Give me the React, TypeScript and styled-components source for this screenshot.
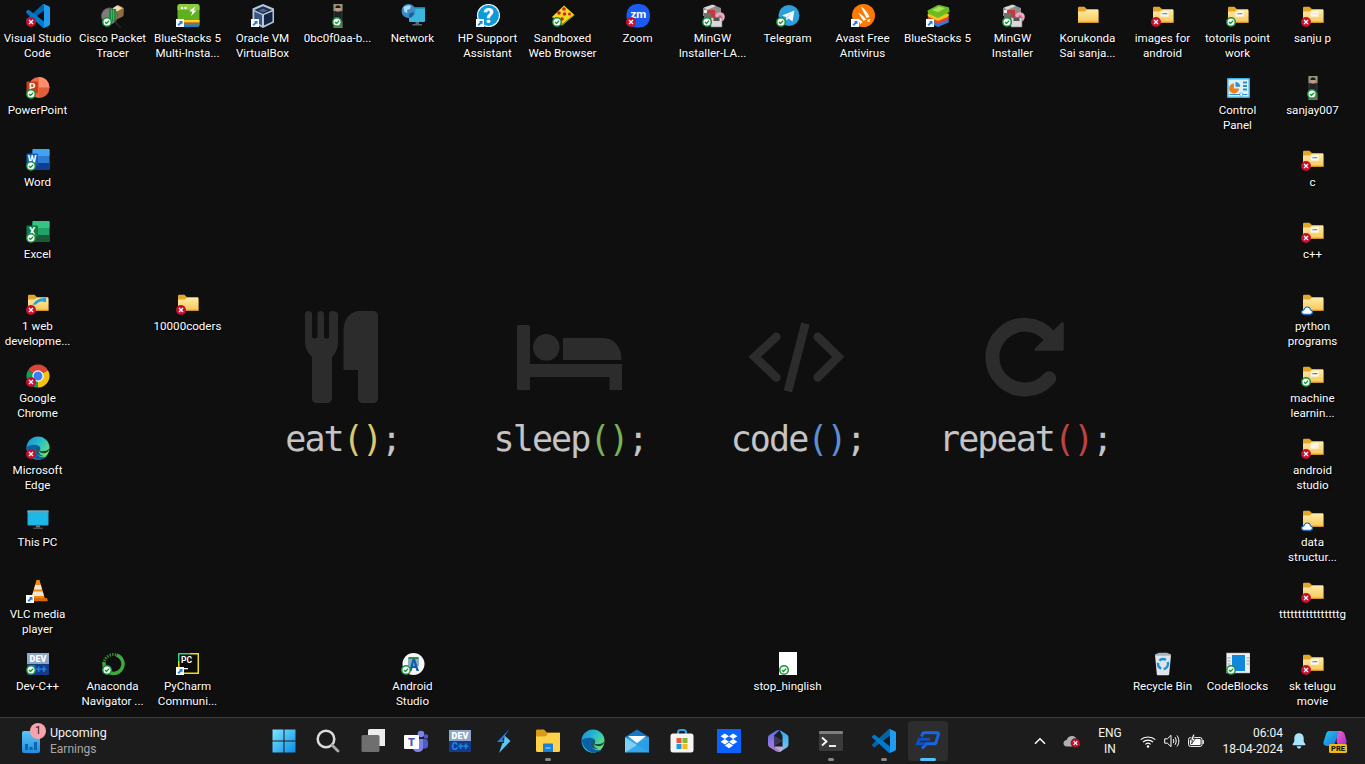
import React, { ReactNode } from "react";
import styled, { createGlobalStyle } from "styled-components";

const Global = createGlobalStyle`
  html, body { margin: 0; padding: 0; background: #0f0f10; overflow: hidden; }
  * { box-sizing: border-box; }
  #root { width: 1365px; height: 764px; }
`;

const Screen = styled.div`
  width: 1365px;
  height: 764px;
  display: flex;
  flex-direction: column;
  overflow: hidden;
  background: #0f0f10;
  font-family: Roboto, "Liberation Sans", sans-serif;
`;

const Desktop = styled.main`
  height: 717px;
  flex: none;
  display: grid;
  grid-template-columns: repeat(18, 75px);
  grid-template-rows: repeat(10, 72px);
  overflow: hidden;
`;

const Tile = styled.div<{ $col: number; $row: number }>`
  grid-column: ${(p) => p.$col};
  grid-row: ${(p) => p.$row};
  display: flex;
  flex-direction: column;
  align-items: center;
  padding-top: 4px;
  z-index: 1;
`;

const IconBox = styled.div`
  position: relative;
  width: 24px;
  height: 24px;
  flex: none;
  svg { display: block; }
`;

const Badge = styled.svg<{ $left?: number }>`
  position: absolute;
  left: ${(p) => p.$left ?? 0}px;
  bottom: 1px;
`;

const Label = styled.div`
  margin-top: 3px;
  font-size: 11.6px;
  line-height: 15px;
  color: #fff;
  text-align: center;
  white-space: pre;
  text-shadow: 1px 1px 2px #000, 0 0 1px #000;
`;

const Wallpaper = styled.section`
  grid-column: 1 / -1;
  grid-row: 1 / -1;
  justify-self: start;
  align-self: start;
  margin: 311px 0 0 229px;
  display: grid;
  grid-template-columns: repeat(4, 227.5px);
`;

const Motif = styled.div`
  display: flex;
  flex-direction: column;
  align-items: center;
`;

const MotifArt = styled.div`
  height: 92px;
  margin-right: 2px;
  display: flex;
  align-items: center;
  justify-content: center;
`;

const Code = styled.div`
  margin-top: 14px;
  font-family: "DejaVu Sans Mono", "Liberation Mono", monospace;
  font-size: 35px;
  line-height: 44px;
  letter-spacing: -1.9px;
  color: #c4c4c4;
  white-space: pre;
`;

const Paren = styled.span<{ $c: string }>`
  color: ${(p) => p.$c};
`;

const Bar = styled.footer`
  height: 47px;
  flex: none;
  display: flex;
  align-items: center;
  background: #1c1c1c;
  border-top: 1px solid #3d3d3d;
  color: #fff;
  font-size: 12px;
`;

const Widget = styled.div`
  width: 264px;
  flex: none;
  display: flex;
  align-items: center;
  padding-left: 22px;
  gap: 10px;
`;

const WidgetIcon = styled.div`
  position: relative;
  width: 18px;
  height: 22px;
  margin-top: 2px;
`;

const Count = styled.span`
  position: absolute;
  left: 8px;
  top: -8px;
  width: 16px;
  height: 16px;
  border-radius: 50%;
  background: #f7a3ab;
  color: #1c1c1c;
  font-size: 11px;
  line-height: 16px;
  text-align: center;
`;

const WidgetText = styled.div`
  display: flex;
  flex-direction: column;
  font-size: 12.5px;
  line-height: 16px;
  color: #f2f2f2;
`;

const WidgetSub = styled.span`
  font-size: 12px;
  color: #a8a8a8;
`;

const Apps = styled.nav`
  display: flex;
  align-items: center;
`;

const AppButton = styled.div<{ $gap?: number; $active?: boolean }>`
  position: relative;
  width: 40px;
  height: 40px;
  margin-left: ${(p) => p.$gap ?? 0}px;
  display: flex;
  align-items: center;
  justify-content: center;
  border-radius: 4px;
  background: ${(p) => (p.$active ? "#2d2d2d" : "transparent")};
  svg { display: block; }
`;

const RunDot = styled.span<{ $active?: boolean }>`
  position: absolute;
  left: 50%;
  bottom: 0;
  width: ${(p) => (p.$active ? 16 : 6)}px;
  height: 3px;
  margin-left: ${(p) => (p.$active ? -8 : -3)}px;
  border-radius: 2px;
  background: ${(p) => (p.$active ? "#4cc2ff" : "#8a8a8a")};
`;

const Tray = styled.aside`
  margin-left: auto;
  display: flex;
  align-items: center;
  padding-right: 10px;
`;

const TrayCell = styled.div<{ $w: number }>`
  position: relative;
  width: ${(p) => p.$w}px;
  height: 44px;
  display: flex;
  align-items: center;
  justify-content: center;
  svg { display: block; }
`;

const TextStack = styled.div<{ $align: string }>`
  display: flex;
  flex-direction: column;
  width: 100%;
  font-size: 12px;
  line-height: 16px;
  text-align: ${(p) => p.$align};
  color: #f4f4f4;
`;

const S = ({ children, vb = "0 0 24 24", w = 24, h = 24 }: { children: ReactNode; vb?: string; w?: number; h?: number }) => (
  <svg viewBox={vb} width={w} height={h} xmlns="http://www.w3.org/2000/svg" fontFamily="Roboto, sans-serif">
    {children}
  </svg>
);

const vsPaths = (a: string, b: string, c: string) => (
  <>
    <path fill={a} d="M96.46 10.8 75.86.9C73.47-.25 70.62.24 68.75 2.11L1.3 63.6c-1.81 1.65-1.81 4.51 0 6.16l5.51 5.01c1.49 1.35 3.72 1.45 5.32.24L93.36 13.37c2.73-2.07 6.64-.12 6.64 3.3v-.24c0-2.4-1.37-4.58-3.54-5.63Z" />
    <path fill={b} d="M96.46 89.2 75.86 99.1c-2.39 1.15-5.24.66-7.11-1.21L1.3 36.4c-1.81-1.65-1.81-4.51 0-6.16l5.51-5.01c1.49-1.35 3.72-1.45 5.32-.24L93.36 86.63c2.73 2.07 6.64.12 6.64-3.3v.24c0 2.4-1.37 4.58-3.54 5.63Z" />
    <path fill={c} d="M75.86 99.13c-2.39 1.15-5.24.66-7.11-1.21 2.31 2.31 6.25.67 6.25-2.59V4.67c0-3.26-3.94-4.9-6.25-2.59 1.87-1.87 4.72-2.36 7.11-1.21L96.46 10.78C98.62 11.82 100 14 100 16.4v67.2c0 2.4-1.38 4.58-3.54 5.62Z" />
  </>
);

const VsCode = () => <S vb="0 0 100 100">{vsPaths("#0065a9", "#007acc", "#1f9cf0")}</S>;

const Folder = ({ paper, swoosh }: { paper?: string; swoosh?: boolean }) => (
  <S>
    <defs>
      <linearGradient id="folderG" x1="0" y1="0" x2="0" y2="1">
        <stop offset="0" stopColor="#ffeaa6" />
        <stop offset="1" stopColor="#f7c653" />
      </linearGradient>
    </defs>
    <path fill="#e6a62c" d="M2 4.200C2 3.200 2.600 2.800 3.400 2.800h5l2.400 2.200H21.400c.6 0 1 .4 1 1v12.200c0 .5-.3.800-.8.800H2.800c-.5 0-.8-.3-.8-.8Z" />
    <path fill="url(#folderG)" d="M2 8.200c0-.4.3-.7.7-.7h6l2-1.400h11c.4 0 .7.300.7.700v11.400c0 .5-.3.800-.7.800H2.700c-.4 0-.7-.3-.7-.8Z" />
    {paper && (
      <>
        <path fill="#fbfaf6" d="M9.500 8.200 16 6.900l1.600.4v5.400H9.500Z" opacity=".92" />
        <path fill={paper} d="M10.500 9.800c1.800-.9 3.700-1 5.800-.6v1h-5.200Z" />
      </>
    )}
    {swoosh && <path fill="#25a5d4" d="M7 13c1.500-4.500 6-7.500 13-7 .5 1.800.3 3.500-.5 4.500-3-1.800-7-1-9 1.800Z" />}
    <path fill="#cf932a" d="M2 17.700h20.400v.5c0 .5-.3.800-.7.800H2.700c-.4 0-.7-.3-.7-.8Z" />
  </S>
);

const Cisco = () => (
  <S>
    <path fill="#c9a766" d="M9 6 17 1l5.500 3-.3 8-7 3.500L9 12Z" />
    <path fill="#8c6f3a" d="m15.200 8 7.300-4-.3 8-7 3.500Z" />
    <path fill="#eeddb0" d="m11 4.800 5-3.200 5 2.600-5 3Z" />
    <circle cx="8.500" cy="12" r="8" fill="#7d7d7d" stroke="#5b5b5b" />
    <path fill="#0d6f2a" d="M8.500 5h6.400v12H8.500Z" />
    <path stroke="#37d060" strokeWidth=".7" d="M9 7h6M9 9h6M9 11h6M9 13h6M9 15h6M10.500 5v12M12.500 5v12" />
    <path stroke="#222" strokeWidth="2" d="m14 18 6 6" />
  </S>
);

const BlueStacksMulti = () => (
  <S>
    <rect x="1.500" y="0" width="22" height="23" rx="2.500" fill="#5eb11d" />
    <path fill="#8ecb3f" d="M1.500 2.500C1.500 1 2.500 0 4 0h17c1.400 0 2.500 1 2.500 2.500V6H1.500Z" />
    <path fill="#ffd21f" d="M1.500 16h22v2.500h-22Z" />
    <path fill="#e6443a" d="M1.500 18.500h22V20.500h-22Z" />
    <path fill="#1c7fd6" d="M1.500 20.500h22c0 1.500-1 2.500-2.500 2.500H4c-1.500 0-2.500-1-2.500-2.500Z" />
    <path fill="#fff" d="m14.500 6 5-3.500-2 4h3l-5.500 5.500 1.500-4.500h-3ZM5 3h2v2H5Zm3.500 0h2v2h-2Z" />
  </S>
);

const VirtualBox = () => (
  <S>
    <path fill="#b9c6d9" d="M12 0 23 4.500v14L12 24 1.500 18.500v-14Z" />
    <path fill="#1c2f55" d="M12 2.200 21 6l-9 4-8.700-4Z" />
    <path fill="#3b5688" d="M3.300 7.500 11 11v10.500l-7.700-4Z" />
    <path fill="#142544" d="M13 11l8.500-3.500v10L13 21.500Z" />
    <path fill="#fff" d="M12 4.500 16.500 6.500 12 8.500 7.500 6.500Z" opacity=".25" />
  </S>
);

const Portrait = () => (
  <S>
    <rect x="7.500" y="0" width="9" height="24" fill="#3a3a38" />
    <rect x="7.500" y="0" width="9" height="7" fill="#9a927e" />
    <circle cx="12" cy="5" r="2.600" fill="#c29a7c" />
    <path fill="#1a1a1a" d="M9.400 4c0-2 1.300-2.800 2.600-2.800S14.600 2 14.600 4Z" />
    <rect x="8.500" y="8" width="7" height="9" fill="#20242a" />
    <rect x="7.500" y="17" width="9" height="7" fill="#6d7564" />
  </S>
);

const Network = () => (
  <S>
    <rect x="8" y="3" width="16" height="15" rx="1" fill="#3bb6de" />
    <rect x="8" y="3" width="16" height="1.500" fill="#1d7fa6" />
    <path fill="#5a6a72" d="M14.500 18h3.500v2h3v1.400h-9.500V20h3Z" />
    <circle cx="7.500" cy="7" r="7" fill="#3d8cc8" />
    <path fill="#a8ddf6" d="M2.500 3.500c2-2 6-2.500 7.500-1.500l-1 3-3 1 .5 3-3-1Z" />
    <path fill="#1a5f96" d="M8 10l4-2 1 2-2.500 3.300L8 14Z" />
  </S>
);

const HpSupport = () => (
  <S>
    <circle cx="12.500" cy="11.500" r="11" fill="#0a9bd8" stroke="#e8f4fa" strokeWidth="1.200" />
    <text x="12.500" y="18.500" textAnchor="middle" fontSize="20" fontWeight="900" fill="#fff">?</text>
  </S>
);

const Sandbox = () => (
  <S>
    <path fill="#f3dc1c" d="M1 13 13 1.500l10.500 9.500L11 21.500Z" />
    <path fill="#8c8a16" d="m1 13 10 8.500L23.500 11l-.5-.6L11 19.800 1.500 12.500Z" />
    <g fill="#d81e1e">
      <circle cx="13" cy="5" r="1.800" />
      <circle cx="8" cy="9" r="1.800" />
      <circle cx="13.500" cy="10" r="1.800" />
      <circle cx="18.500" cy="10" r="1.500" />
      <circle cx="11" cy="15" r="1.800" />
    </g>
  </S>
);

const Zoom = () => (
  <S>
    <rect x="0.500" y="0" width="23.500" height="23.500" rx="10.500" fill="#1a5cf2" />
    <text x="12.300" y="13.500" textAnchor="middle" fontSize="11.500" fontWeight="700" fill="#fff">zm</text>
  </S>
);

const MinGW = () => (
  <S>
    <path fill="#8d8d8d" d="M2 4 11 .5l9 3.500v8H2Z" />
    <path fill="#d9d9d9" d="M3 3.500 12 .8 15 2 6 6Z" />
    <path fill="#c23b3b" d="M5 6h9v7H5Z" />
    <path fill="#ededed" d="M3 6h3v12H3Z" />
    <circle cx="19" cy="13" r="4.800" fill="#f0a8c0" />
    <circle cx="19" cy="13" r="1.800" fill="#b76a8a" />
    <rect x="10" y="13.500" width="11" height="9.500" fill="#d9d9d9" stroke="#777" strokeWidth=".6" />
    <rect x="12.500" y="13.500" width="6" height="3.500" fill="#555" />
    <rect x="3" y="9" width="7" height="13" fill="#6f6f6f" />
  </S>
);

const Telegram = () => (
  <S>
    <circle cx="13" cy="11.500" r="10.500" fill="#2d9fd9" />
    <path fill="#f3fafd" d="M6 11.500 18.500 6.500l-2 11-4-3-2 2-.5-3.500Z" />
    <path fill="#c8e0ee" d="m10 13 6-4.500-4.500 5.800-1.500 2Z" />
  </S>
);

const Avast = () => (
  <S>
    <circle cx="12.500" cy="11.500" r="11.500" fill="#ff7800" />
    <path fill="#fff" d="M10 2.500c2 1 6 5 8.500 10l-3 1.500C13.500 9.500 11 5.500 10 2.500Zm-3 6c3 1.500 6 4 8 7L12.500 17C10.500 13.500 8.500 11 7 8.500Zm-1.500 6c2 .3 4 1.200 6 3.500l-2 2c-1.500-2.400-3-4-4-5.500ZM19.500 15c-1 0-2.500.5-3.500 1.500.5 1 1.500 1.500 2.500 1.500Z" />
  </S>
);

const BlueStacks = () => (
  <S>
    <path fill="#2f7bd9" d="M1.500 16 12 12l11 4-.5 2.500L12 23l-10-4.500Z" />
    <path fill="#e64535" d="M1.500 13 12 9l11 4-.5 2.500-10.500 4.500-10-4.500Z" />
    <path fill="#f7c51d" d="M1.500 10 12 6l11 4-.5 2.500L12 17 2 12.500Z" />
    <path fill="#6bbb21" d="M1.500 6.500 12 1c3 0 8 1.500 11 2.500l.5 4.500L12 14 2 9.500Z" />
    <path fill="#a9e05a" d="M6 6 13 2.500l6 1.800-7 4Z" />
  </S>
);

const ControlPanel = () => (
  <S>
    <rect x="1" y="2" width="23" height="20" rx="1" fill="#36b2e6" />
    <rect x="2.500" y="3.500" width="20" height="17" fill="#dbf1fb" />
    <path fill="#e9821d" d="M8 7.500a5 5 0 1 0 5 5H8Z" />
    <path fill="#2f8ed0" d="M9.500 6a4.800 4.800 0 0 1 4.800 4.800H9.500Z" />
    <path fill="#2f8ed0" d="M17 5.500h4v2h-4Zm0 3.500h4v2h-4Zm0 3.500h4v2h-4Z" />
    <path stroke="#2f8ed0" strokeWidth="1" d="M3.500 18.500h18" />
    <rect x="14" y="17" width="2.500" height="3" fill="#fff" stroke="#2f8ed0" strokeWidth=".5" />
  </S>
);

const Office = ({ dark, mid, light, letter, pale }: { dark: string; mid: string; light: string; letter: string; pale: string }) => (
  <S>
    <rect x="6.500" y="1" width="17" height="21" rx="1" fill={mid} />
    <rect x="6.500" y="1" width="17" height="7" rx="1" fill={light} />
    <rect x="6.500" y="15" width="17" height="7" rx="1" fill={dark} />
    <rect x="0.500" y="5.500" width="11.500" height="12" rx="1" fill={pale} />
    <text x="6.200" y="15" textAnchor="middle" fontSize="10" fontWeight="700" fill="#fff">{letter}</text>
  </S>
);

const PowerPoint = () => (
  <S>
    <circle cx="13" cy="11.500" r="10.500" fill="#ed6c47" />
    <path fill="#ff8f6b" d="M13 1a10.500 10.500 0 0 1 10.500 10.500H13Z" />
    <path fill="#d35230" d="M13 11.500h10.500A10.500 10.500 0 0 1 13 22Z" opacity=".5" />
    <rect x="0.500" y="5.500" width="11.500" height="12" rx="1" fill="#c43e1c" />
    <text x="6.200" y="15" textAnchor="middle" fontSize="10" fontWeight="700" fill="#fff">P</text>
  </S>
);

const Chrome = () => (
  <S>
    <path fill="#db4437" d="M12 12 2.040 6.250A11.500 11.500 0 0 1 21.960 6.250Z" />
    <path fill="#f4c20d" d="M12 12 21.960 6.250A11.500 11.500 0 0 1 12 23.500Z" />
    <path fill="#0f9d58" d="M12 12 12 23.500A11.500 11.500 0 0 1 2.040 6.250Z" />
    <circle cx="12" cy="12" r="5.700" fill="#fff" />
    <circle cx="12" cy="12" r="4.500" fill="#3a7ff0" />
  </S>
);

const Edge = () => (
  <S>
    <defs>
      <linearGradient id="edgeG" x1="0" y1="0" x2="1" y2=".7">
        <stop offset="0" stopColor="#1390d8" />
        <stop offset=".55" stopColor="#2bc0c8" />
        <stop offset="1" stopColor="#6ee56a" />
      </linearGradient>
    </defs>
    <circle cx="12" cy="12" r="11.500" fill="url(#edgeG)" />
    <path fill="#0a5fa8" d="M.6 11.500C2 17.500 7 23.500 13 23.500c3 0 6-1 8-3-4 1.500-9 .5-11-3.500-1.500-3 0-6 3-7-3-2-10-2-12.400 1.500Z" />
    <path fill="#0f2e4a" d="M13 10c-3 1-4.500 4-3 7 1.500 2.500 5 3.800 8 3.200-3-.5-5-2.500-5.200-5 2-1 1.800-3.800.2-5.200Z" opacity=".7" />
    <path fill="#0f0f10" d="M12.800 14.800c1.500 2.500 5.500 3 8.200 1.500 1.500-1 2.400-2.800 2.500-4.300-1.500 2.800-6.500 4-10.700 2.800Z" opacity=".75" />
  </S>
);

const Monitor = () => (
  <S>
    <rect x="1.500" y="2.500" width="21" height="15" rx=".8" fill="#29a8d9" />
    <rect x="1.500" y="2.500" width="21" height="2" fill="#8f9ca1" />
    <path fill="#1bb8e8" d="M2.500 4.500h19v12h-19Z" />
    <rect x="10" y="17.500" width="4" height="2" fill="#777" />
    <rect x="7" y="19.500" width="10" height="1.500" rx=".5" fill="#4b4b4b" />
  </S>
);

const Vlc = () => (
  <S>
    <path fill="#f28a0f" d="M10.500 0h3l6 20.500h-15Z" />
    <path fill="#efe6d8" d="M9.200 5h5.600l1.200 4.500H8Zm-1.800 6.500h9.200l1.400 4.500H6Z" />
    <path fill="#d96a00" d="M3 18h18l.7 2.500c.1.500-.2.800-.7.800H3c-.5 0-.8-.3-.7-.8Z" />
  </S>
);

const DevCpp = () => (
  <S>
    <rect x="1" y="1" width="22" height="22" fill="#163a88" />
    <rect x="1" y="1" width="22" height="11" fill="#8ea7c8" />
    <text x="12" y="10" textAnchor="middle" fontSize="9" fontWeight="900" fill="#fff">DEV</text>
    <text x="12" y="21" textAnchor="middle" fontSize="10" fontWeight="900" fill="#1b82e6">C++</text>
  </S>
);

const Anaconda = () => (
  <S>
    <g transform="rotate(-70 12.500 12)">
      <circle cx="12.500" cy="12" r="9.500" fill="none" stroke="#2f8d2e" strokeWidth="3" strokeDasharray="1.400 1.200" />
      <circle cx="12.500" cy="12" r="9.500" fill="none" stroke="#3fa83a" strokeWidth="3.400" strokeDasharray="43 17" />
    </g>
  </S>
);

const PyCharm = () => (
  <S>
    <rect x="2" y="1" width="21" height="21" fill="#e8e01d" />
    <path fill="#21d789" d="M2 1h12v2H4v6H2Z" />
    <rect x="3.500" y="2.500" width="18" height="18" fill="#0b0b0b" />
    <text x="10.500" y="11" textAnchor="middle" fontSize="8.500" fontWeight="700" fill="#fff">PC</text>
    <rect x="5" y="16" width="7" height="1.300" fill="#fff" />
  </S>
);

const AndroidStudio = () => (
  <S>
    <circle cx="12.500" cy="12" r="11" fill="#f6f7f8" />
    <path fill="#3e7d9c" d="M7 6h11v8H7Z" opacity=".6" />
    <path fill="#0f5fb0" d="M11.500 7h2.500l4 12h-2.500l-1-3h-3l-1 3H8Zm1.300 3-.9 4h1.800Z" />
    <path fill="#2e8b57" d="M7.500 5h10v2h-10Z" />
  </S>
);

const StopDoc = () => (
  <S>
    <rect x="3" y="0" width="18" height="23" fill="#fff" />
  </S>
);

const Recycle = () => (
  <S>
    <path fill="#dfe5ea" d="M4 3h16l-1.800 19c0 .8-.6 1.300-1.300 1.300H7.100c-.7 0-1.300-.5-1.300-1.300Z" />
    <path fill="#a9b4bc" d="M4 2.500 8 .8h8l4 1.700v1.300H4Z" />
    <circle cx="12" cy="12" r="5" fill="none" stroke="#1a8fdb" strokeWidth="2.400" strokeDasharray="7 2.500" />
  </S>
);

const CodeBlocks = () => (
  <S>
    <rect x="0.500" y="1" width="23.500" height="20" fill="#eef0f2" stroke="#9aa4ab" strokeWidth=".5" />
    <rect x="6" y="3" width="13" height="16" fill="#1088dc" />
    <path stroke="#93a1ab" strokeWidth="1" d="M1.500 6h3M1.500 9h3M1.500 12h3M20.500 6h3M20.500 9h3M20.500 12h3" />
  </S>
);

const Windows = () => (
  <S>
    <defs>
      <linearGradient id="winG" x1="0" y1="0" x2="1" y2="1">
        <stop offset="0" stopColor="#7ce6ff" />
        <stop offset="1" stopColor="#0a8ce8" />
      </linearGradient>
    </defs>
    <path fill="url(#winG)" d="M.5.500h11v11H.5Zm12 0h11v11h-11Zm-12 12h11v11H.5Zm12 0h11v11h-11Z" />
  </S>
);

const Search = () => (
  <S>
    <circle cx="10" cy="10" r="8.300" fill="none" stroke="#dcdcdc" strokeWidth="2.500" />
    <path stroke="#a9a9a9" strokeWidth="2.800" strokeLinecap="round" d="m16.200 16.200 5.800 5.800" />
  </S>
);

const TaskView = () => (
  <S>
    <rect x="7" y="0" width="18" height="17" rx="1.500" fill="#ededed" />
    <rect x="0.500" y="6" width="18" height="17" rx="1.500" fill="#6f6f6f" />
  </S>
);

const Teams = () => (
  <S>
    <circle cx="17" cy="5" r="3.300" fill="#7b83eb" />
    <circle cx="22" cy="7.500" r="2.200" fill="#5059c9" />
    <rect x="15" y="10" width="9" height="9.500" rx="3" fill="#5059c9" />
    <path fill="#7b83eb" d="M9 10h10v9c0 2.700-2.300 4-5 4s-5-1.500-5-4Z" />
    <rect x="0" y="6" width="15" height="14" rx="1" fill="#fff" />
    <text x="7.500" y="17" textAnchor="middle" fontSize="11" fontWeight="900" fill="#4b53bc">T</text>
  </S>
);

const Bolt = () => (
  <S>
    <path fill="#2a7fe6" d="M17.500 0 5 13h6l1-1.500L10 11Z" />
    <path fill="#58c9f6" d="M12.500 6.500 18.500 12 7 24l3.500-10H12Z" />
  </S>
);

const Explorer = () => (
  <S>
    <path fill="#d99a1a" d="M0 2c0-.8.6-1.400 1.400-1.400h6.600l3 3h12.600c.2 0 .4.2.4.4v4H0Z" />
    <path fill="#ffd24a" d="M0 7.500l10-.2 2-3.300h12v17.500c0 .8-.6 1.500-1.500 1.500h-21C.7 23 0 22.300 0 21.500Z" />
    <path fill="#1c7fd8" d="M7 15.500c0-.6.4-1 1-1h8c.6 0 1 .4 1 1V23H7Z" />
    <path fill="#58b8f0" d="M9.500 18h5v2h-5Z" />
  </S>
);

const Mail = () => (
  <S>
    <path fill="#1478c4" d="M0 8 12 .5 24 8v3H0Z" />
    <path fill="#35a8ea" d="M0 8.500h24V23.500H0Z" />
    <path fill="#fff" d="M3 7h18l-9 7Z" />
    <path fill="#1b92dc" d="M0 8.500 12 16l12-7.500-12 8Z" />
    <path fill="#7dd1f7" d="M0 8.500 12 16 0 23.500Z" />
    <path fill="#2b9fe6" d="M24 8.500 12 16l12 7.500Z" />
  </S>
);

const Store = () => (
  <S>
    <path fill="none" stroke="#2aa5e8" strokeWidth="2" d="M8 6V3.500C8 2 9 1 10.500 1h3C15 1 16 2 16 3.500V6" />
    <rect x="0.500" y="4.500" width="23" height="19" rx="2.500" fill="#f4f4f4" />
    <rect x="6.500" y="9" width="5" height="5" fill="#ea5a30" />
    <rect x="12.500" y="9" width="5" height="5" fill="#7fba2f" />
    <rect x="6.500" y="15" width="5" height="5" fill="#1b9ae6" />
    <rect x="12.500" y="15" width="5" height="5" fill="#fdb813" />
  </S>
);

const Dropbox = () => (
  <S>
    <rect x="0" y="0" width="24" height="24" fill="#0a62ff" />
    <path fill="#fff" d="M7.800 4.500 12 7.200 7.800 10 3.600 7.200Zm8.400 0L20.400 7.200 16.200 10 12 7.200ZM3.600 12.800 7.800 10 12 12.800 7.800 15.500Zm12.600-2.800 4.200 2.800-4.200 2.700L12 12.800ZM7.800 16.500 12 13.800l4.200 2.700L12 19.300Z" />
  </S>
);

const M365 = () => (
  <S vb="-1.500 0 24 24">
    <defs>
      <linearGradient id="mL" x1="0" y1="0" x2="0" y2="1">
        <stop offset="0" stopColor="#5a6fe0" />
        <stop offset="1" stopColor="#b47ae0" />
      </linearGradient>
      <linearGradient id="mR" x1="0" y1="0" x2="0" y2="1">
        <stop offset="0" stopColor="#2fa8ea" />
        <stop offset="1" stopColor="#7fc8f0" />
      </linearGradient>
    </defs>
    <path fill="url(#mL)" d="M2.500 5.500 9 1.500C9.800 1 11 .8 12 1.200L6.500 6.500V17.500L12 22.800c-1 .4-2.200.2-3-.3l-6.500-4C1 17.600.5 16.500.5 15V9c0-1.500.5-2.600 2-3.500Z" />
    <path fill="url(#mR)" d="M12 1.200c.5.100 1 .3 1.500.6l5.500 3.500c1.500 1 2 2 2 3.500v6.400c0 1.500-.5 2.500-2 3.500l-5.500 3.500c-.5.3-1 .5-1.500.6l3-5V6.500Z" />
    <path fill="#d2b2ea" d="M6.500 17.500 12 22.800c.5-.1 1-.3 1.500-.6l2-4.700Z" opacity=".9" />
    <path fill="#3f3a66" d="M6.500 6.500 15 11.700 6.500 17.500Z" opacity=".85" />
  </S>
);

const Terminal = () => (
  <S>
    <rect x="0" y="2" width="24" height="20" rx="1.500" fill="#3a3a3a" />
    <rect x="0" y="2" width="24" height="3" rx="1" fill="#7e7e7e" />
    <path fill="none" stroke="#fff" strokeWidth="1.800" d="m3 8.500 4.500 4L3 16.500" />
    <path stroke="#fff" strokeWidth="1.800" d="M10 17h7" />
  </S>
);

const ChatLogo = () => (
  <S vb="0 0 26 20" w={26} h={20}>
    <path fill="none" stroke="#1766e8" strokeWidth="3" d="M6.500 5.500 7.800 2.400c.2-.4.6-.7 1-.7h13.500c.9 0 1.400.7 1.200 1.500L21 11.500c-.2.7-.8 1.200-1.500 1.200H11.500L7 17.500" />
    <path fill="none" stroke="#0f4fc0" strokeWidth="3" d="M15 8.200H4.500L2.400 12.700h8" />
  </S>
);

const Chevron = () => (
  <S vb="0 0 12 8" w={12} h={8}>
    <path fill="none" stroke="#fff" strokeWidth="1.500" d="M1 6.800 6 1.800l5 5" />
  </S>
);

const TrayCloud = () => (
  <S vb="0 0 18 14" w={18} h={14}>
    <path fill="#b0b0b0" d="M4 12.500C1.800 12.500.5 11 .5 9.300.5 7.500 2 6 3.700 6 4.500 3.500 6.500 2 9 2c3 0 5 2.200 5.200 5 1.600.1 2.800 1.500 2.800 3 0 1.700-1.300 2.500-3 2.500Z" />
    <circle cx="12.500" cy="9" r="4.500" fill="#c8102e" stroke="#1c1c1c" strokeWidth=".6" />
    <path stroke="#fff" strokeWidth="1.200" d="m10.700 7.200 3.600 3.600m0-3.600-3.600 3.600" />
  </S>
);

const Wifi = () => (
  <S vb="0 0 16 13" w={16} h={13}>
    <g fill="none" stroke="#fff" strokeWidth="1.100">
      <path d="M.7 4.700C4.700 1 11.300 1 15.300 4.700" />
      <path d="M3 7c2.800-2.500 7.200-2.500 10 0" />
      <path d="M5.400 9.300c1.500-1.300 3.700-1.300 5.200 0" />
    </g>
    <circle cx="8" cy="11.500" r="1.200" fill="#fff" />
  </S>
);

const Volume = () => (
  <S vb="0 0 16 14" w={16} h={14}>
    <path fill="none" stroke="#fff" strokeWidth="1" d="M.7 4.800h2.700L7 1.300v11.400L3.400 9.200H.7Z" />
    <path fill="none" stroke="#fff" strokeWidth="1" d="M9.200 5c.8 1.200.8 2.800 0 4M11 3.200c1.600 2.300 1.600 5.300 0 7.600M13 1.500c2.400 3.300 2.400 7.700 0 11" />
  </S>
);

const Battery = () => (
  <S vb="0 0 16 14" w={16} h={14}>
    <rect x=".6" y="3.600" width="13.400" height="8.800" rx="1.800" fill="none" stroke="#fff" strokeWidth="1" />
    <rect x="2" y="5" width="10.600" height="6" rx=".8" fill="#fff" />
    <rect x="14.500" y="6" width="1.300" height="4" rx=".6" fill="#fff" />
    <path fill="#fff" stroke="#1c1c1c" strokeWidth=".8" d="M5 .2 2.500 6h2L3.500 10 7.500 4.500h-2L7 .2Z" />
  </S>
);

const Bell = () => (
  <S vb="0 0 14 16" w={14} h={16}>
    <path fill="#a9e4fb" d="M7 .3C4 .3 2.300 2.500 2.300 5.300v3.300L.6 11.300c-.2.500 0 .9.600.9h11.600c.6 0 .8-.4.600-.9l-1.700-2.700V5.300C11.700 2.500 10 .3 7 .3Z" />
    <path fill="#a9e4fb" d="M4.800 13.200h4.400C9 14.600 8.100 15.600 7 15.600s-2-1-2.200-2.400Z" />
  </S>
);

const Copilot = () => (
  <S vb="0 0 24 23" w={24} h={23}>
    <defs>
      <linearGradient id="cpA" x1="0" y1="0" x2="1" y2="1">
        <stop offset="0" stopColor="#20c7ea" />
        <stop offset="1" stopColor="#1f6fe0" />
      </linearGradient>
      <linearGradient id="cpB" x1="0" y1="0" x2="1" y2="1">
        <stop offset="0" stopColor="#f562c0" />
        <stop offset="1" stopColor="#a52fd6" />
      </linearGradient>
    </defs>
    <path fill="url(#cpB)" d="M13 1h4.500c2 0 3.600 1.500 4.300 3.500L23.500 11c.5 2-.8 4-3.200 4H17c-1.500 0-2.800-1-3.200-2.500Z" />
    <path fill="url(#cpA)" d="M6 1h8c1 0 1.500.7 1.200 2L12 13c-.6 2-2 3-4 3H4c-2.600 0-4-2-3.400-4.200L3 4C3.500 2 4.500 1 6 1Z" />
    <path fill="#7fd36a" d="M7 16h5l-1 2H7Z" opacity=".8" />
    <rect x="6" y="14" width="18" height="9" rx="1.500" fill="#f5b80f" />
    <text x="15" y="21.200" textAnchor="middle" fontSize="7.500" fontWeight="900" fill="#1c1c1c">PRE</text>
  </S>
);

const EarningsIcon = () => (
  <S vb="0 0 18 22" w={18} h={22}>
    <defs>
      <linearGradient id="earn" x1="0" y1="0" x2="0" y2="1">
        <stop offset="0" stopColor="#5cc6f5" />
        <stop offset="1" stopColor="#1f8ee0" />
      </linearGradient>
    </defs>
    <rect x="0" y="0" width="18" height="22" rx="2" fill="url(#earn)" />
    <path fill="#1561b0" d="M3 13h3v6H3Zm4.500 3h3v3h-3Zm4.500-5h3v8h-3Z" />
  </S>
);

const OkBadge = ({ left }: { left?: number }) => (
  <Badge viewBox="0 0 10 10" width={10} height={10} $left={left}>
    <circle cx="5" cy="5" r="5" fill="#17913a" />
    <circle cx="5" cy="5" r="3.500" fill="#fff" />
    <path fill="none" stroke="#17913a" strokeWidth="1.300" d="m3 5 1.500 1.500L7.200 3.600" />
  </Badge>
);

const ErrBadge = () => (
  <Badge viewBox="0 0 10 10" width={10} height={10}>
    <circle cx="5" cy="5" r="5" fill="#c50f2f" />
    <path stroke="#fff" strokeWidth="1.300" d="m3 3 4 4m0-4-4 4" />
  </Badge>
);

const ShortcutBadge = () => (
  <Badge viewBox="0 0 8 8" width={8} height={8}>
    <rect width="8" height="8" fill="#fff" />
    <path fill="#1a7fe0" d="M3 2h3.500v3.500L5.400 4.400 2.800 7 1.500 5.700l2.600-2.600Z" />
  </Badge>
);

const CloudBadge = () => (
  <Badge viewBox="0 0 12 9" width={12} height={9}>
    <path fill="#fff" stroke="#0f78d4" strokeWidth="1.100" d="M3 8.300C1.500 8.300.7 7.300.7 6.200c0-1.200 1-2 2-2C3.300 2.300 4.700 1 6.300 1c1.700 0 3 1.300 3.200 3 1.100.1 1.900 1 1.900 2.100 0 1.300-.9 2.200-2.200 2.200Z" />
  </Badge>
);

type Status = "ok" | "err" | "link" | "cloud" | undefined;
type TileData = [number, number, string, ReactNode, Status, number?];

const office = {
  word: <Office dark="#103f91" mid="#2b7cd3" light="#41a5ee" pale="#185abd" letter="W" />,
  excel: <Office dark="#185c37" mid="#21a366" light="#33c481" pale="#107c41" letter="X" />,
};

const tiles: TileData[] = [
  [1, 1, "Visual Studio\nCode", <VsCode />, "err"],
  [2, 1, "Cisco Packet\nTracer", <Cisco />, "ok", 1],
  [3, 1, "BlueStacks 5\nMulti-Insta...", <BlueStacksMulti />, "link"],
  [4, 1, "Oracle VM\nVirtualBox", <VirtualBox />, "link"],
  [5, 1, "0bc0f0aa-b...", <Portrait />, "ok", 6],
  [6, 1, "Network", <Network />, undefined],
  [7, 1, "HP Support\nAssistant", <HpSupport />, "link"],
  [8, 1, "Sandboxed\nWeb Browser", <Sandbox />, "ok", 1],
  [9, 1, "Zoom", <Zoom />, "err"],
  [10, 1, "MinGW\nInstaller-LA...", <MinGW />, "ok", 1],
  [11, 1, "Telegram", <Telegram />, "ok"],
  [12, 1, "Avast Free\nAntivirus", <Avast />, "link"],
  [13, 1, "BlueStacks 5", <BlueStacks />, "link"],
  [14, 1, "MinGW\nInstaller", <MinGW />, "ok", 1],
  [15, 1, "Korukonda\nSai sanja...", <Folder />, undefined],
  [16, 1, "images for\nandroid", <Folder paper="#3a9be0" />, "err"],
  [17, 1, "totorils point\nwork", <Folder paper="#3a9be0" />, "ok"],
  [18, 1, "sanju p", <Folder paper="#f3dede" />, "err"],
  [1, 2, "PowerPoint", <PowerPoint />, "ok"],
  [17, 2, "Control\nPanel", <ControlPanel />, undefined],
  [18, 2, "sanjay007", <Portrait />, "ok", 6],
  [1, 3, "Word", office.word, "ok"],
  [18, 3, "c", <Folder paper="#3a9be0" />, "err"],
  [1, 4, "Excel", office.excel, "ok"],
  [18, 4, "c++", <Folder paper="#3a9be0" />, "err"],
  [1, 5, "1 web\ndevelopme...", <Folder swoosh />, "err"],
  [3, 5, "10000coders", <Folder />, "err"],
  [18, 5, "python\nprograms", <Folder />, "cloud"],
  [1, 6, "Google\nChrome", <Chrome />, "err"],
  [18, 6, "machine\nlearnin...", <Folder paper="#2f9a56" />, "ok"],
  [1, 7, "Microsoft\nEdge", <Edge />, "err"],
  [18, 7, "android\nstudio", <Folder paper="#f1f1f1" />, "err"],
  [1, 8, "This PC", <Monitor />, undefined],
  [18, 8, "data\nstructur...", <Folder />, "cloud"],
  [1, 9, "VLC media\nplayer", <Vlc />, "link"],
  [18, 9, "ttttttttttttttttg", <Folder />, "err"],
  [1, 10, "Dev-C++", <DevCpp />, "ok"],
  [2, 10, "Anaconda\nNavigator ...", <Anaconda />, "ok", 1],
  [3, 10, "PyCharm\nCommuni...", <PyCharm />, "link"],
  [6, 10, "Android\nStudio", <AndroidStudio />, "ok"],
  [11, 10, "stop_hinglish", <StopDoc />, "ok", 3],
  [16, 10, "Recycle Bin", <Recycle />, undefined],
  [17, 10, "CodeBlocks", <CodeBlocks />, "ok"],
  [18, 10, "sk telugu\nmovie", <Folder paper="#3a9be0" />, "err"],
];

const statusBadge = (s: Status, left?: number) => {
  if (s === "ok") return <OkBadge left={left} />;
  if (s === "err") return <ErrBadge />;
  if (s === "link") return <ShortcutBadge />;
  if (s === "cloud") return <CloudBadge />;
  return null;
};

const FORK = "#2c2c2c";

const ForkKnife = () => (
  <S vb="0 0 73 92" w={73} h={92}>
    <path fill={FORK} d="M0 3C0 1 1.500 0 3.500 0S7 1 7 3v22.500c0 1.500 1 2 2.500 2s3-.5 3-2V3c0-2 1.500-3 3.200-3s3.300 1 3.300 3v22.500c0 1.500 1 2 2.500 2s2.500-.5 2.500-2V3c0-2 1.500-3 3.300-3S33 1 33 3v27c0 8-3 13-6 16v41c0 3-2 5-5 5H12c-3 0-5-2-5-5V46c-3-3-7-8-7-16Z" />
    <path fill={FORK} d="M38.500 20C38.500 8 45 0 55 0h13c3 0 5 1.500 5 4.500V87c0 3-2 5-5 5H58c-3 0-5-2-5-5V59H40c-1 0-1.500-.5-1.500-1.500Z" />
  </S>
);

const BedIcon = () => (
  <S vb="0 0 105 65" w={105} h={65}>
    <path fill={FORK} d="M0 2C0 .8.800 0 2 0h9c1.200 0 2 .8 2 2v37h92v26H92.500V52H13v13H0Z" />
    <circle cx="29.300" cy="22.300" r="13.300" fill={FORK} />
    <path fill={FORK} d="M46 13h40c11 0 18.500 9 18.500 22H46Z" />
  </S>
);

const CodeIcon = () => (
  <S vb="115 60 295 220" w={98} h={73}>
    <g fill="none" stroke="#2c2c2c" strokeWidth="26" strokeLinecap="round" strokeLinejoin="miter">
      <path d="M200 108 135 168l65 62" />
      <path d="M325 108l62 60-62 62" />
      <path strokeLinecap="butt" d="M288 68 235 272" />
    </g>
  </S>
);

const RepeatIcon = () => (
  <S vb="820 50 245 240" w={82} h={80}>
    <path fill="none" stroke="#2c2c2c" strokeWidth="42" strokeLinecap="round" d="M1018 234A97 97 0 1 1 1019 108" />
    <path fill="#2c2c2c" stroke="#2c2c2c" strokeWidth="8" strokeLinejoin="round" d="M1058 69v78h-80Z" />
  </S>
);

const motifs = [
  { art: <ForkKnife />, word: "eat", c: "#dcc86e" },
  { art: <BedIcon />, word: "sleep", c: "#79b355" },
  { art: <CodeIcon />, word: "code", c: "#5c90d0" },
  { art: <RepeatIcon />, word: "repeat", c: "#b84444" },
];

const apps: { icon: ReactNode; gap: number; dot?: boolean; active?: boolean }[] = [
  { icon: <Windows />, gap: 0 },
  { icon: <Search />, gap: 4 },
  { icon: <TaskView />, gap: 5 },
  { icon: <Teams />, gap: 3 },
  { icon: <DevCpp />, gap: 4 },
  { icon: <Bolt />, gap: 4 },
  { icon: <Explorer />, gap: 4, dot: true },
  { icon: <Edge />, gap: 4.5 },
  { icon: <Mail />, gap: 4.5 },
  { icon: <Store />, gap: 5 },
  { icon: <Dropbox />, gap: 7 },
  { icon: <M365 />, gap: 8.5 },
  { icon: <Terminal />, gap: 13.5, dot: true },
  { icon: <VsCode />, gap: 12.5, dot: true },
  { icon: <ChatLogo />, gap: 4.5, active: true },
];

export default function App() {
  return (
    <Screen>
      <Global />
      <Desktop>
        <Wallpaper>
          {motifs.map((m) => (
            <Motif key={m.word}>
              <MotifArt>{m.art}</MotifArt>
              <Code>
                {m.word}
                <Paren $c={m.c}>()</Paren>;
              </Code>
            </Motif>
          ))}
        </Wallpaper>
        {tiles.map(([col, row, label, icon, status, left]) => (
          <Tile key={`${col}-${row}`} $col={col} $row={row}>
            <IconBox>
              {icon}
              {statusBadge(status, left)}
            </IconBox>
            <Label>{label}</Label>
          </Tile>
        ))}
      </Desktop>
      <Bar>
        <Widget>
          <WidgetIcon>
            <EarningsIcon />
            <Count>1</Count>
          </WidgetIcon>
          <WidgetText>
            Upcoming
            <WidgetSub>Earnings</WidgetSub>
          </WidgetText>
        </Widget>
        <Apps>
          {apps.map((a, i) => (
            <AppButton key={i} $gap={a.gap} $active={a.active}>
              {a.icon}
              {(a.dot || a.active) && <RunDot $active={a.active} />}
            </AppButton>
          ))}
        </Apps>
        <Tray>
          <TrayCell $w={40}><Chevron /></TrayCell>
          <TrayCell $w={24}><TrayCloud /></TrayCell>
          <TrayCell $w={52}>
            <TextStack $align="center">
              <span>ENG</span>
              <span>IN</span>
            </TextStack>
          </TrayCell>
          <TrayCell $w={24}><Wifi /></TrayCell>
          <TrayCell $w={24}><Volume /></TrayCell>
          <TrayCell $w={24}><Battery /></TrayCell>
          <TrayCell $w={75}>
            <TextStack $align="right">
              <span>06:04</span>
              <span>18-04-2024</span>
            </TextStack>
          </TrayCell>
          <TrayCell $w={31}><Bell /></TrayCell>
          <TrayCell $w={41}><Copilot /></TrayCell>
        </Tray>
      </Bar>
    </Screen>
  );
}
